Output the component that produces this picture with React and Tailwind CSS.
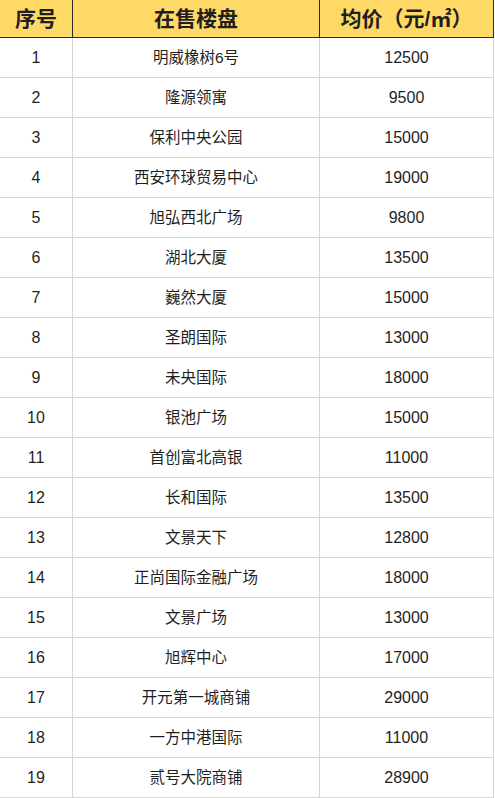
const rows = [
  ['1', '明威橡树6号', '12500'],
  ['2', '隆源领寓', '9500'],
  ['3', '保利中央公园', '15000'],
  ['4', '西安环球贸易中心', '19000'],
  ['5', '旭弘西北广场', '9800'],
  ['6', '湖北大厦', '13500'],
  ['7', '巍然大厦', '15000'],
  ['8', '圣朗国际', '13000'],
  ['9', '未央国际', '18000'],
  ['10', '银池广场', '15000'],
  ['11', '首创富北高银', '11000'],
  ['12', '长和国际', '13500'],
  ['13', '文景天下', '12800'],
  ['14', '正尚国际金融广场', '18000'],
  ['15', '文景广场', '13000'],
  ['16', '旭辉中心', '17000'],
  ['17', '开元第一城商铺', '29000'],
  ['18', '一方中港国际', '11000'],
  ['19', '贰号大院商铺', '28900'],
]

export default function App() {
  return (
    <div
      className="w-[495px] h-[798px] bg-white overflow-hidden text-[#1f1f1f]"
      style={{ fontFamily: '"Liberation Sans", "Noto Sans CJK SC", sans-serif' }}
    >
      {/* header */}
      <div className="flex h-[38px] bg-[#ffd966] border-b border-[#2a2a2a] w-[494px] border-r">
        <div className="w-[73px] shrink-0 border-r border-[#2a2a2a] flex items-center justify-center text-[21px] font-bold">
          序号
        </div>
        <div className="w-[247px] shrink-0 border-r border-[#2a2a2a] flex items-center justify-center text-[21px] font-bold">
          在售楼盘
        </div>
        <div className="flex-1 flex items-center justify-center text-[21px] font-bold">
          均价（元/㎡）
        </div>
      </div>

      {/* body */}
      {rows.map(r => (
        <div key={r[0]} className="flex h-[40px] border-b border-[#d4d4d4] w-[494px] border-r">
          <div className="w-[73px] shrink-0 border-r border-[#d4d4d4] flex items-center justify-center text-[16px]">
            {r[0]}
          </div>
          <div className="w-[247px] shrink-0 border-r border-[#d4d4d4] flex items-center justify-center text-[15.5px]">
            {r[1]}
          </div>
          <div className="flex-1 flex items-center justify-center text-[16px]">
            {r[2]}
          </div>
        </div>
      ))}
    </div>
  )
}
